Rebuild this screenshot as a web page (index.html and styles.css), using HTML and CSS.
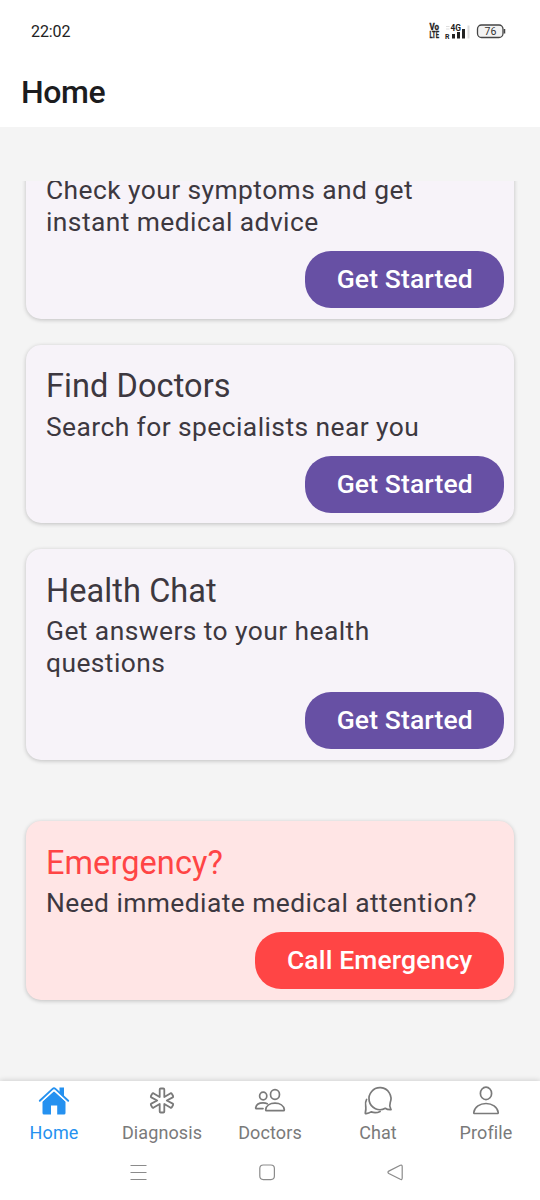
FILE: index.html
```html
<!DOCTYPE html>
<html lang="en">
<head>
<meta charset="utf-8">
<title>Home</title>
<link rel="stylesheet" href="styles.css">
</head>
<body>
<div class="screen">
  <div class="status">
    <span class="clock">22:02</span>
    <svg class="indicators" width="80" height="20" viewBox="0 0 80 20">
      <g class="ind-text">
        <text class="heavy" x="1.500" y="9.300" font-size="8.500" textLength="9.500" lengthAdjust="spacingAndGlyphs">Vo</text>
        <text class="heavy" x="1.500" y="17.300" font-size="8.500" textLength="9.500" lengthAdjust="spacingAndGlyphs">LTE</text>
        <text x="22.500" y="9.500" font-size="9.500" textLength="10.500" lengthAdjust="spacingAndGlyphs">4G</text>
        <text x="17" y="17.500" font-size="8" textLength="4.500" lengthAdjust="spacingAndGlyphs">R</text>
      </g>
      <path d="M18 5.500h3.500M18 8h3.500" stroke="#ddd"/>
      <path d="M25.500 13v4.500M30.500 11v6.500M35.500 8v9.500" stroke="#222" stroke-width="3"/>
      <path d="M40.500 4.500v13" stroke="#ddd" stroke-width="2"/>
      <rect x="49.500" y="4" width="25.500" height="12.500" rx="4" fill="#f3f3f3" stroke="#444" stroke-width="1.300"/>
      <path d="M76.500 8v4.500" stroke="#444" stroke-width="1.500"/>
      <text x="62.500" y="14" font-size="10.500" text-anchor="middle" fill="#333">76</text>
    </svg>
  </div>
  <header class="appbar"><h1>Home</h1></header>

  <main class="content">
    <div class="scroller">
      <section class="card card-scrolled">
        <p>Check your symptoms and get<br>instant medical advice</p>
        <button class="btn">Get Started</button>
      </section>
      <section class="card">
        <h2>Find Doctors</h2>
        <p>Search for specialists near you</p>
        <button class="btn">Get Started</button>
      </section>
      <section class="card">
        <h2>Health Chat</h2>
        <p>Get answers to your health<br>questions</p>
        <button class="btn">Get Started</button>
      </section>
      <section class="card emergency">
        <h2>Emergency?</h2>
        <p>Need immediate medical attention?</p>
        <button class="btn btn-call">Call Emergency</button>
      </section>
    </div>
  </main>

  <nav class="tabs">
    <a class="tab active">
      <svg width="32" height="32" viewBox="0 0 32 32" fill="currentColor"><path d="M16 6.200 4.500 16.600V28q0 1.500 1.500 1.500h7V20.500h6.200v9H26q1.500 0 1.500-1.500V16.600Z"/><path d="M21.500 2.500H26v10l-4.500-4.200Z"/><path d="M3 17 14.900 6q1.100-1 2.200 0L29 17" fill="none" stroke="#fff" stroke-width="1.200"/><path d="M1.800 15.800 14.600 3.900q1.400-1.200 2.800 0L30.200 15.800" fill="none" stroke="currentColor" stroke-width="1.900" stroke-linecap="round"/></svg>
      <span>Home</span>
    </a>
    <a class="tab">
      <svg width="32" height="32" viewBox="0 0 32 32" fill="none" stroke="currentColor" stroke-width="1.800" stroke-linejoin="round"><path d="M13.700 4.500q0-1 1-1h2.600q1 0 1 1v7.600l6-3.700q1-.5 1.500.4l1.300 2.200q.4.900-.4 1.400L20.800 15.500l5.900 3.100q.8.500.4 1.400l-1.300 2.200q-.5.900-1.500.4l-6-3.700v7.600q0 1-1 1h-2.600q-1 0-1-1v-7.600l-6 3.700q-1 .5-1.500-.4L4.900 20q-.4-.9.400-1.400l5.900-3.100-5.900-3.100q-.8-.5-.4-1.400l1.300-2.200q.5-.9 1.500-.4l6 3.700Z"/></svg>
      <span>Diagnosis</span>
    </a>
    <a class="tab">
      <svg width="32" height="32" viewBox="0 0 32 32" fill="none" stroke="currentColor" stroke-width="1.700" stroke-linecap="round" stroke-linejoin="round"><ellipse cx="21" cy="9.500" rx="4.500" ry="4.900"/><ellipse cx="9.200" cy="11" rx="3.600" ry="3.900"/><path d="M12.500 25.700q-.8 0-.8-1c.4-4.200 4.400-6.500 9.300-6.500s8.900 2.300 9.300 6.500q0 1-.8 1ZM13.300 18.700c-1.200-.6-2.700-.8-4.300-.8-4 0-6.700 2-7.300 4.800q-.1.900.8.900h6.500"/></svg>
      <span>Doctors</span>
    </a>
    <a class="tab">
      <svg width="32" height="32" viewBox="0 0 32 32" fill="none" stroke="currentColor" stroke-width="1.700" stroke-linecap="round" stroke-linejoin="round"><path d="M28.800 24q.7.700-.4.700-3.400-.1-5.100-1.400A11 11 0 1 1 28.200 17.700q-1.200 3.500.6 6.300Z"/><path d="M4.600 14.400c-1.800 3-1.100 5.800-.8 7.500.3 2-.1 4.200-.5 6.100q0 .9.800.7c2-.2 3.500-.8 5-1.800 3.500 1.300 6.400.9 9-.5"/></svg>
      <span>Chat</span>
    </a>
    <a class="tab">
      <svg width="32" height="32" viewBox="0 0 32 32" fill="none" stroke="currentColor" stroke-width="1.700" stroke-linejoin="round"><ellipse cx="16" cy="8.400" rx="5.600" ry="6.200"/><path d="M4.600 28.500q-.9 0-.8-1C4.500 21.800 10 18.500 16 18.500s11.500 3.300 12.200 9q.1 1-.8 1Z"/></svg>
      <span>Profile</span>
    </a>
  </nav>
  <div class="sysnav">
    <svg width="540" height="48" viewBox="0 0 540 48" fill="none" stroke="#8b8b8b" stroke-width="1.200" stroke-linejoin="round"><path d="M130.500 13.500h16M130.500 20.500h16M130.500 27.500h16"/><rect x="259.800" y="13" width="14.600" height="14.600" rx="3.500"/><path d="M400.300 13.300q1.900-.8 1.900 1.200v11.600q0 2-1.900 1.200l-11.500-5.800q-1.700-1.200 0-2.400Z"/></svg>
  </div>
</div>
</body>
</html>
```
FILE: styles.css
```css
* { box-sizing: border-box; }
body { margin: 0; font-family: Roboto, sans-serif; background: #fff; }
h1, h2, p { margin: 0; font-weight: 400; }
.screen { width: 540px; height: 1200px; display: flex; flex-direction: column; overflow: hidden; }
.status { height: 56px; padding: 6px 32px 0 31px; display: flex; justify-content: space-between; align-items: center; flex: none; }
.clock { font-size: 16px; color: #222; letter-spacing: -0.1px; }
.indicators { display: block; }
.ind-text { font-weight: 700; fill: #222; }
.heavy { stroke: #222; stroke-width: .3px; }
.appbar { height: 71px; padding: 0 21px; display: flex; align-items: center; flex: none; }
.appbar h1 { font-size: 32px; font-weight: 500; color: #1c1c1e; letter-spacing: -.4px; }
.content { height: 954px; padding: 54px 0 26px; background: #f4f4f4; flex: none; }
.scroller { height: 874px; padding: 0 25.6px; overflow: hidden; display: flex; flex-direction: column; gap: 26px; }
.card { flex: none; display: flex; flex-direction: column; padding: 20px 10.2px 10.5px 20.4px; border-radius: 15px; background: #f7f3f9; box-shadow: 0 1px 4px rgba(0, 0, 0, .22); color: #3d3840; }
.card-scrolled { margin-top: -27px; }
.card h2 { font-size: 32.5px; line-height: 41px; padding-top: 1.5px; margin-bottom: 3.5px; letter-spacing: .08px; }
.card p { font-size: 26.4px; line-height: 32px; letter-spacing: .43px; white-space: nowrap; }
.btn { align-self: flex-end; width: 199px; height: 57px; margin-top: 13px; border: 0; border-radius: 26px; background: #6750a4; color: #fff; font: 500 26.5px/55px Roboto, sans-serif; letter-spacing: .12px; padding: 0 0 2px; }
.emergency { margin-top: 35.5px; background: #ffe5e5; }
.emergency h2 { color: #ff4545; }
.btn-call { width: 249px; background: #ff4545; }
.tabs { height: 71px; padding-top: 4px; display: flex; flex: none; background: #fff; box-shadow: 0 -1px 5px rgba(0, 0, 0, .14); }
.tab { flex: 1; display: flex; flex-direction: column; align-items: center; color: #7a7a7a; font-size: 18px; line-height: 22px; letter-spacing: .1px; }
.tab span { margin-top: 5px; }
.tab.active { color: #2591f0; }
.sysnav { height: 48px; flex: none; position: relative; background: #fff; }
.sysnav svg { display: block; }
```
